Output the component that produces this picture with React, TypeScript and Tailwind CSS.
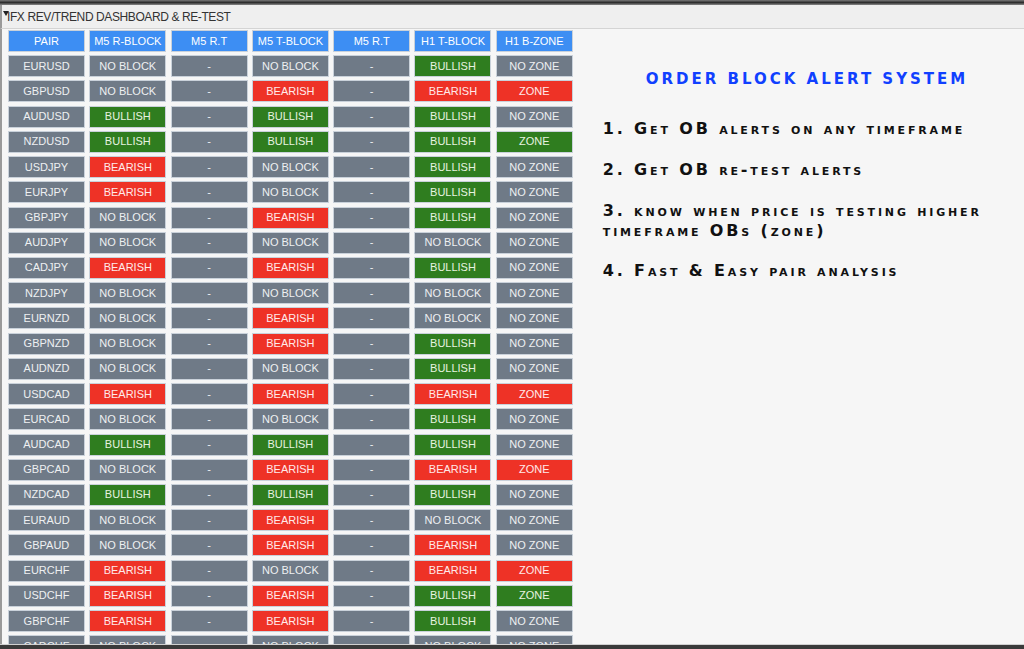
import React from 'react';

type Cell = { t: string; c: 'g' | 'r' | 'h' | 'n' };

const HEAD = ['PAIR', 'M5 R-BLOCK', 'M5 R.T', 'M5 T-BLOCK', 'M5 R.T', 'H1 T-BLOCK', 'H1 B-ZONE'];

// pair, m5 r-block, m5 t-block, h1 t-block, h1 zone (Z = red zone, G = green zone)
const ROWS: [string, string, string, string, string][] = [
  ['EURUSD', 'N', 'N', 'U', 'O'],
  ['GBPUSD', 'N', 'D', 'D', 'Z'],
  ['AUDUSD', 'U', 'U', 'U', 'O'],
  ['NZDUSD', 'U', 'U', 'U', 'G'],
  ['USDJPY', 'D', 'N', 'U', 'O'],
  ['EURJPY', 'D', 'N', 'U', 'O'],
  ['GBPJPY', 'N', 'D', 'U', 'O'],
  ['AUDJPY', 'N', 'N', 'N', 'O'],
  ['CADJPY', 'D', 'D', 'U', 'O'],
  ['NZDJPY', 'N', 'N', 'N', 'O'],
  ['EURNZD', 'N', 'D', 'N', 'O'],
  ['GBPNZD', 'N', 'D', 'U', 'O'],
  ['AUDNZD', 'N', 'N', 'U', 'O'],
  ['USDCAD', 'D', 'D', 'D', 'Z'],
  ['EURCAD', 'N', 'N', 'U', 'O'],
  ['AUDCAD', 'U', 'U', 'U', 'O'],
  ['GBPCAD', 'N', 'D', 'D', 'Z'],
  ['NZDCAD', 'U', 'U', 'U', 'O'],
  ['EURAUD', 'N', 'D', 'N', 'O'],
  ['GBPAUD', 'N', 'D', 'D', 'O'],
  ['EURCHF', 'D', 'N', 'D', 'Z'],
  ['USDCHF', 'D', 'D', 'U', 'G'],
  ['GBPCHF', 'D', 'D', 'U', 'O'],
  ['CADCHF', 'N', 'N', 'N', 'O'],
];

function block(k: string): Cell {
  if (k === 'U') return { t: 'BULLISH', c: 'g' };
  if (k === 'D') return { t: 'BEARISH', c: 'r' };
  if (k === 'Z') return { t: 'ZONE', c: 'r' };
  if (k === 'G') return { t: 'ZONE', c: 'g' };
  if (k === 'O') return { t: 'NO ZONE', c: 'n' };
  return { t: 'NO BLOCK', c: 'n' };
}

const tone: Record<Cell['c'], string> = {
  h: 'bg-[#3d8ef3] text-white',
  n: 'bg-[#6f7a87] text-[#eef0f2]',
  g: 'bg-[#2f7d1f] text-[#e8f3e0]',
  r: 'bg-[#ee3226] text-[#ffeaea]',
};

function Box({ cell }: { cell: Cell }) {
  return (
    <div
      className={`h-[22px] flex items-center justify-center border border-[#c9d1da] text-[11px] leading-none ${tone[cell.c]}`}
    >
      {cell.t}
    </div>
  );
}

const item = 'leading-[20px] text-[16px] tracking-[2.85px] [font-variant:small-caps] whitespace-nowrap';

export default function App() {
  const cells: Cell[] = [];
  HEAD.forEach(h => cells.push({ t: h, c: 'h' }));
  ROWS.forEach(([pair, r, t, h1, z]) => {
    cells.push({ t: pair, c: 'n' });
    cells.push(block(r));
    cells.push({ t: '-', c: 'n' });
    cells.push(block(t));
    cells.push({ t: '-', c: 'n' });
    cells.push(block(h1));
    cells.push(block(z));
  });

  return (
    <div className="w-[1024px] h-[649px] overflow-hidden flex flex-col bg-[#f6f6f6] font-['Liberation_Sans',Arial,sans-serif]">
      {/* window chrome */}
      <div className="h-[5px] shrink-0 bg-gradient-to-b from-[#7a7a7a] via-[#2e2e2e] to-[#8a8a8a]" />
      <div className="h-[24px] shrink-0 bg-[#efefef] border-b border-[#d4d4d4] border-l-2 border-l-[#9a9a9a] flex items-center relative">
        <span className="absolute left-[1px] top-[6px] w-0 h-0 border-l-[3px] border-r-[3px] border-t-[5px] border-l-transparent border-r-transparent border-t-[#222]" />
        <span className="pl-[5px] text-[12px] text-[#333] tracking-[-0.4px]">IFX REV/TREND DASHBOARD &amp; RE-TEST</span>
      </div>

      <div className="flex-1 min-h-0 flex border-l-2 border-l-[#9a9a9a] overflow-hidden">
        <div className="pl-[6px] pt-[1px] shrink-0">
          <div className="grid grid-cols-[repeat(7,77px)] gap-x-[4.3px] gap-y-[3.23px]">
            {cells.map((c, i) => (
              <Box key={i} cell={c} />
            ))}
          </div>
        </div>

        <div className="flex flex-col pl-[30px] pt-[40px] text-[#111] font-['DejaVu_Sans',sans-serif] font-bold">
          <div className="ml-[43px] leading-[20px] text-[15px] text-[#1040ff] tracking-[3px] whitespace-nowrap">
            ORDER BLOCK ALERT SYSTEM
          </div>
          <div className={`mt-[30px] ${item}`}>1. Get OB alerts on any timeframe</div>
          <div className={`mt-[21px] ${item}`}>2. Get OB re-test alerts</div>
          <div className={`mt-[21px] ${item}`}>
            3. know when price is testing higher
            <br />
            timeframe OBs (zone)
          </div>
          <div className={`mt-[20px] ${item}`}>4. Fast &amp; Easy pair analysis</div>
        </div>
      </div>

      <div className="h-[1px] shrink-0 bg-[#d0d0d0]" />
      <div className="h-[4px] shrink-0 bg-[#3a3a3a]" />
    </div>
  );
}
